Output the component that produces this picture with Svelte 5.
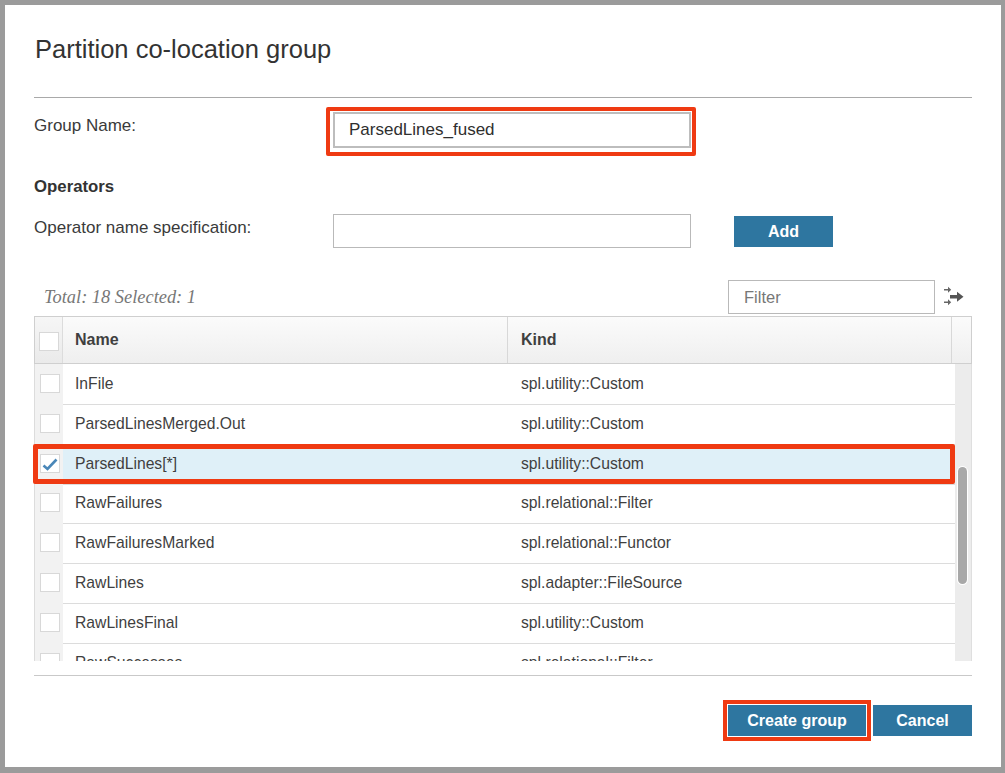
<script>
  const rows = [
    { name: 'InFile', kind: 'spl.utility::Custom' },
    { name: 'ParsedLinesMerged.Out', kind: 'spl.utility::Custom' },
    { name: 'ParsedLines[*]', kind: 'spl.utility::Custom', selected: true },
    { name: 'RawFailures', kind: 'spl.relational::Filter' },
    { name: 'RawFailuresMarked', kind: 'spl.relational::Functor' },
    { name: 'RawLines', kind: 'spl.adapter::FileSource' },
    { name: 'RawLinesFinal', kind: 'spl.utility::Custom' },
    { name: 'RawSuccesses', kind: 'spl.relational::Filter' }
  ];
</script>

<div class="dialog">
  <header class="head"><h1>Partition co-location group</h1></header>

  <div class="field first">
    <label for="gn">Group Name:</label>
    <span class="hl"><input id="gn" value="ParsedLines_fused" /></span>
  </div>

  <h2>Operators</h2>

  <div class="field">
    <label for="op">Operator name specification:</label>
    <input id="op" />
    <button class="btn add">Add</button>
  </div>

  <div class="tools">
    <em>Total: 18 Selected: 1</em>
    <input class="filter" placeholder="Filter" />
    <svg class="flow" width="20" height="22" viewBox="0 0 20 22" aria-hidden="true">
      <path d="M0 3h4V0.800l3.200 3-3.200 3V4.600H0z" fill="#666" />
      <path d="M0 15.500h4v-2.200l3.200 3-3.200 3v-2.200H0z" fill="#666" />
      <path d="M6 9h7V5.800l6.500 5-6.500 5V12.600H6z" fill="#555" />
    </svg>
  </div>

  <div class="table">
    <div class="thead">
      <div class="chk"><span class="box"></span></div>
      <div class="th name">Name</div>
      <div class="th kind">Kind</div>
      <div class="th end"></div>
    </div>
    <div class="tbody">
      <div class="rows">
        {#each rows as r}
          <div class="row" class:sel={r.selected}>
            <div class="chk">
              <span class="box">
                {#if r.selected}
                  <svg width="18" height="17" viewBox="0 0 18 17" aria-hidden="true">
                    <path d="M2.500 10.500L6.500 14L15.500 4.500" fill="none" stroke="#4a87b8" stroke-width="2.600" />
                  </svg>
                {/if}
              </span>
            </div>
            <div class="td name">{r.name}</div>
            <div class="td kind">{r.kind}</div>
          </div>
        {/each}
      </div>
      <div class="track"><div class="thumb"></div></div>
    </div>
    <div class="rowmark"></div>
  </div>

  <footer class="foot">
    <button class="btn create">Create group</button>
    <button class="btn cancel">Cancel</button>
  </footer>
</div>

<style>
  :global(body) {
    background: #9b9b9b;
    font-family: "Liberation Sans", Arial, sans-serif;
    color: #333;
  }
  .dialog {
    box-sizing: border-box;
    width: 996px;
    height: 762px;
    margin: 5px 4px 6px 5px;
    padding: 0 29px;
    background: #fff;
    overflow: hidden;
  }
  .head {
    box-sizing: border-box;
    height: 93px;
    padding-top: 27px;
    border-bottom: 1px solid #a9a9a9;
  }
  h1 {
    margin: 0;
    font-size: 25.500px;
    line-height: 34px;
    font-weight: 400;
    color: #333;
    padding-left: 1px;
  }
  h2 {
    margin: 29px 0 17px;
    font-size: 16.800px;
    line-height: 20px;
    font-weight: 700;
    color: #333;
  }
  .field {
    display: grid;
    grid-template-columns: 299px 358px auto;
    align-items: start;
  }
  .field.first {
    margin-top: 14px;
  }
  label {
    font-size: 17px;
    line-height: 24px;
    color: #3a3a3a;
    margin-top: 2px;
  }
  input {
    box-sizing: border-box;
    width: 358px;
    height: 34px;
    display: block;
    padding: 0 15px;
    border: 1px solid #b9b9b9;
    border-radius: 0;
    outline: none;
    background: #fff;
    font: 17px "Liberation Sans", Arial, sans-serif;
    color: #2f2f2f;
  }
  .hl {
    display: block;
    width: 358px;
    margin: -5px 0 -8px -7px;
    padding: 1px 1px 4px 3px;
    border: 4px solid #ef3a12;
    border-radius: 2px;
    box-sizing: content-box;
  }
  .hl input {
    height: 36px;
    padding-left: 14px;
    border-width: 2px;
    border-color: #bdbdbd;
  }
  .btn {
    border: 0;
    border-radius: 0;
    padding: 0;
    background: #2e76a0;
    color: #fff;
    font: 700 16px/31px "Liberation Sans", Arial, sans-serif;
    height: 31px;
  }
  .add {
    width: 99px;
    margin: 2px 0 0 43px;
  }
  .tools {
    display: flex;
    align-items: center;
    height: 34px;
    margin-top: 32px;
  }
  .tools em {
    flex: 1;
    padding-left: 10px;
    font: italic 18.400px "Liberation Serif", "Times New Roman", serif;
    color: #777;
  }
  .filter {
    width: 207px;
    font-size: 16.500px;
  }
  .filter::placeholder {
    color: #777;
    opacity: 1;
  }
  .flow {
    margin: 0 8px 0 9px;
  }
  .table {
    position: relative;
    margin-top: 2px;
  }
  .thead {
    box-sizing: border-box;
    display: grid;
    grid-template-columns: 28px 445px 444px 1fr;
    height: 48px;
    border: 1px solid #cfcfcf;
    background: linear-gradient(#fbfbfb, #efefef);
  }
  .chk {
    display: flex;
    justify-content: center;
    padding: 15px 0 0 1px;
    box-sizing: border-box;
  }
  .thead .chk {
    border-right: 1px solid #dcdcdc;
    background: linear-gradient(#f6f6f6, #eaeaea);
  }
  .box {
    box-sizing: border-box;
    display: block;
    width: 20px;
    height: 19px;
    background: #fff;
    border: 1px solid #d8d8d8;
  }
  .box svg {
    display: block;
  }
  .th {
    font-size: 16px;
    font-weight: 700;
    line-height: 46px;
    color: #3f3f3f;
    padding-left: 12px;
    border-right: 1px solid #d8d8d8;
  }
  .th.kind {
    padding-left: 13px;
  }
  .th.end {
    border: 0;
    padding: 0;
  }
  .tbody {
    display: flex;
    height: 297px;
  }
  .rows {
    flex: 1;
    overflow: hidden;
    border-left: 1px solid #dcdcdc;
  }
  .row {
    box-sizing: border-box;
    display: grid;
    grid-template-columns: 28px 445px 1fr;
    height: 39.800px;
  }
  .row .chk {
    padding-top: 10px;
    background: #f2f2f2;
    border-bottom: 1px solid #fff;
  }
  .td {
    font-size: 15.700px;
    line-height: 40px;
    color: #3f3f3f;
    padding-left: 12px;
    border-bottom: 1px solid #dcdcdc;
    white-space: nowrap;
  }
  .td.kind {
    padding-left: 13px;
  }
  .row.sel .td {
    background: #dff0f8;
  }
  .track {
    box-sizing: border-box;
    width: 17px;
    padding: 103px 4px 0 3px;
    background: #ececec;
    border-right: 1px solid #dfdfdf;
  }
  .thumb {
    height: 117px;
    border-radius: 5px;
    background: #a8a8a8;
    box-shadow: 0 0 0 1px #fff;
  }
  .rowmark {
    position: absolute;
    left: -1px;
    top: 128px;
    width: 922px;
    height: 40px;
    box-sizing: border-box;
    border: 5px solid #ef3a12;
    border-radius: 2px;
  }
  .foot {
    display: flex;
    justify-content: flex-end;
    gap: 7px;
    margin-top: 14px;
    padding-top: 29px;
    border-top: 1px solid #c9c9c9;
  }
  .create {
    width: 138px;
    outline: 4px solid #ef3a12;
    outline-offset: 1px;
    box-shadow: 0 0 0 1px #fff;
  }
  .cancel {
    width: 99px;
  }
</style>
